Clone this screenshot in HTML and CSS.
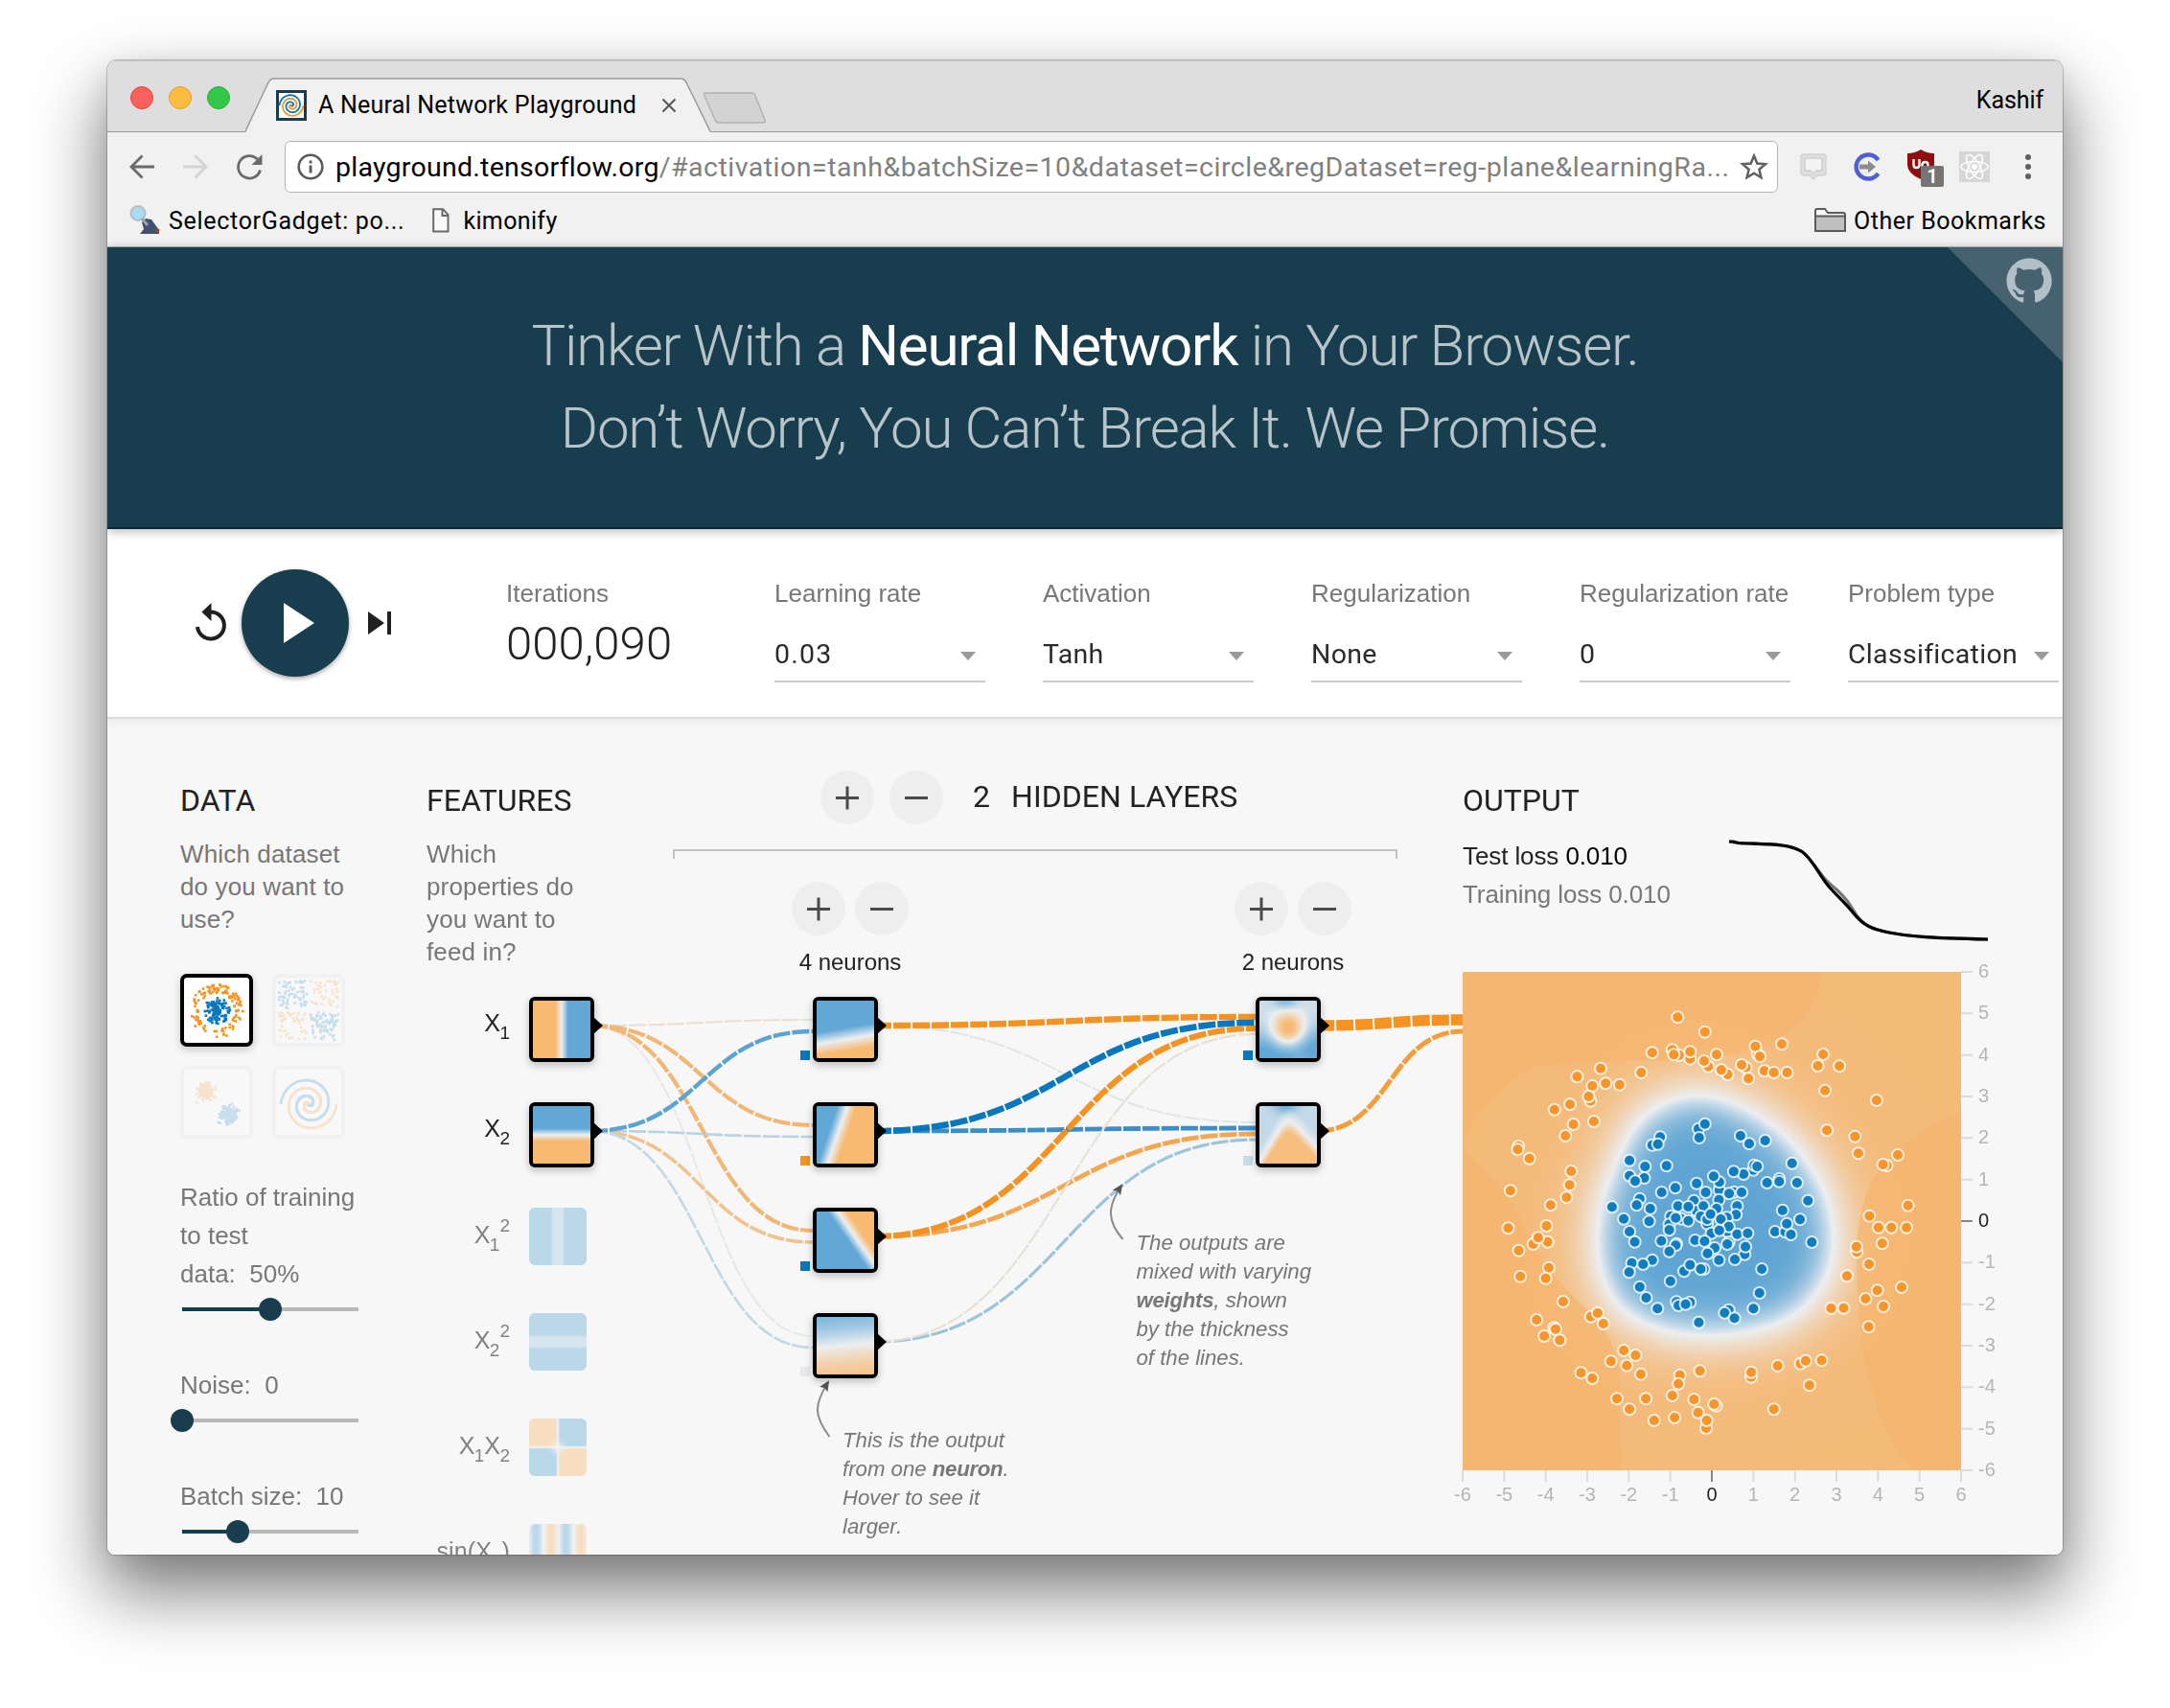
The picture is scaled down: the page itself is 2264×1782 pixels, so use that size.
FILE: index.html
```html
<!DOCTYPE html>
<html lang="en">
<head>
<meta charset="utf-8">
<title>A Neural Network Playground</title>
<link rel="stylesheet" href="styles.css">
</head>
<body>
<div class="window">
  <div class="tabstrip">
    <div class="lights"><i class="red"></i><i class="yellow"></i><i class="green"></i></div>
    <svg class="tab-shape" width="560" height="58" viewBox="0 0 560 58">
      <path d="M478 16h50q3 0 4 3l10 25q1 3-2 3h-46q-3 0-4-3l-11-25q-1-3 2-3z" fill="#d3d3d3" stroke="#b3b3b3" stroke-width="1.500"/>
      <path d="M0 58L1 55.500L24 5Q26 1 30 1H454Q458 1 460 5L484 55.500L485 58z" fill="#f1f1f1"/>
      <path d="M0 56L24 5Q26 1 30 1H454Q458 1 460 5L485 56" fill="none" stroke="#9a9a9a" stroke-width="1.500"/>
    </svg>
    <div class="tab">
      <svg class="favicon" width="32" height="32" viewBox="0 0 32 32"><path d="M0 0h32v32H0z" fill="#183d4e"/><path d="M3 3h26v26H3z" fill="#fff"/><path id="fav-a" fill="none" stroke="#0877bd" stroke-width="1.800"/><path id="fav-b" fill="none" stroke="#f59322" stroke-width="1.800"/></svg>
      <span class="tab-title">A Neural Network Playground</span>
      <svg width="16" height="16" viewBox="0 0 16 16"><path d="M1.500 1.500l13 13m0-13l-13 13" stroke="#555" stroke-width="2"/></svg>
    </div>
    <span class="profile">Kashif</span>
  </div>
  <div class="toolbar">
    <svg width="28" height="28" viewBox="0 0 28 28" fill="none" stroke="#6a6a6a" stroke-width="2.800"><path d="M27 14H3M14.500 2.500L3 14l11.500 11.500"/></svg>
    <svg class="fwd" width="28" height="28" viewBox="0 0 28 28" fill="none" stroke="#d3d3d3" stroke-width="2.800"><path d="M1 14h24M13.500 2.500L25 14L13.500 25.500"/></svg>
    <svg class="reload" width="28" height="28" viewBox="0 0 28 28"><path d="M25.500 17.500A11.700 11.700 0 1 1 22.500 6" fill="none" stroke="#6a6a6a" stroke-width="2.800"/><path d="M27.500 1v11h-11z" fill="#6a6a6a"/></svg>
    <div class="omnibox">
      <svg width="28" height="28" viewBox="0 0 28 28"><circle cx="14" cy="14" r="12.300" fill="none" stroke="#5a5a5a" stroke-width="2.600"/><path d="M12.600 12.500h2.900v8h-2.900zM12.600 7.500h2.900v3h-2.900z" fill="#5a5a5a"/></svg>
      <span class="url"><b>playground.tensorflow.org</b>/#activation=tanh&amp;batchSize=10&amp;dataset=circle&amp;regDataset=reg-plane&amp;learningRa...</span>
      <svg class="star" width="30" height="30" viewBox="0 0 30 30"><path d="M15 3.500l3.300 8 8.700.7-6.600 5.600 2 8.400-7.400-4.500-7.400 4.500 2-8.400L3 12.200l8.700-.7z" fill="none" stroke="#5f5f5f" stroke-width="2.500"/></svg>
    </div>
    <div class="extensions">
      <svg width="30" height="30" viewBox="0 0 30 30"><path d="M5 2h20q3 0 3 3v16q0 3-3 3h-6l-4 4-4-4H5q-3 0-3-3V5q0-3 3-3z" fill="#dedede" stroke="#d2d2d2" stroke-width="1.500"/><path d="M8 6h14q2 0 2 2v9q0 2-2 2h-4l-3 3-3-3H8q-2 0-2-2V8q0-2 2-2z" fill="#f3f3f3" stroke="#cfcfcf" stroke-width="1.500"/></svg>
      <svg width="30" height="30" viewBox="0 0 30 30"><path d="M26.500 8A12.500 12.500 0 1 0 26.500 22" fill="none" stroke="#4f5fd6" stroke-width="4.500"/><path d="M7 12.500h9V8.500l8 6.500-8 6.500v-4H7z" fill="#8d8d8d"/></svg>
      <svg width="40" height="40" viewBox="0 0 40 40"><path d="M15 0q6 4 14 4v12q0 9-14 15Q1 25 1 16V4Q9 4 15 0z" fill="#8e0d0d"/><path d="M7.500 10v6q0 3 3 3t3-3v-6M16.500 23v-7q0-3 3-3t3 3v4" fill="none" stroke="#fff" stroke-width="2.400"/><rect x="15" y="17" width="24" height="22" rx="2" fill="#757575"/><text x="27" y="35" text-anchor="middle" class="badge">1</text></svg>
      <svg width="32" height="32" viewBox="0 0 32 32"><path d="M0 0h32v32H0z" fill="#d6d6d6"/><g fill="none" stroke="#fff" stroke-width="1.500"><ellipse cx="16" cy="16" rx="14" ry="5.500"/><ellipse cx="16" cy="16" rx="14" ry="5.500" transform="rotate(60 16 16)"/><ellipse cx="16" cy="16" rx="14" ry="5.500" transform="rotate(120 16 16)"/></g><circle cx="16" cy="16" r="3" fill="#fff"/></svg>
      <svg width="8" height="28" viewBox="0 0 8 28" fill="#5f5f5f"><circle cx="4" cy="4" r="3"/><circle cx="4" cy="14" r="3"/><circle cx="4" cy="24" r="3"/></svg>
    </div>
  </div>
  <div class="bookmarks">
    <svg width="32" height="30" viewBox="0 0 32 30"><path d="M13 18l4-4 6 1 5 7 3 4v4H11l4-5z" fill="#44506f"/><path d="M29 24l3 2-2 2-3-1z" fill="#a34a20"/><circle cx="9" cy="8.500" r="7.500" fill="#a8dcf5" stroke="#b3bec6" stroke-width="2"/><path d="M13 14l6 7" stroke="#9aa3ad" stroke-width="3"/></svg>
    <span class="sel">SelectorGadget: po...</span>
    <svg class="doc" width="18" height="26" viewBox="0 0 18 26"><path d="M1.200 1.200h10l5.300 6v17.300H1.200zM10.500 1.500v6.500h6" fill="#fafafa" stroke="#6a6a6a" stroke-width="2"/></svg>
    <span class="kim">kimonify</span>
    <span class="other"><svg width="33" height="26" viewBox="0 0 33 26"><path d="M1 24V3q0-2 2-2h8l3 4h16q2 0 2 2v17z" fill="#f6f6f6" stroke="#5a5a5a" stroke-width="2"/><path d="M1 8.500h31V24H1z" fill="#c0c0c0" stroke="#5a5a5a" stroke-width="2"/></svg>Other Bookmarks</span>
  </div>

  <header class="hero">
    <h1>Tinker With a <b>Neural Network</b> in Your Browser.<br>Don’t Worry, You Can’t Break It. We Promise.</h1>
    <svg class="corner" width="120" height="120" viewBox="0 0 120 120"><path d="M0 0h120v120z" fill="#466270"/><path transform="translate(61.500 11.500) scale(2.950)" fill="#b3bfc6" d="M8 0C3.580 0 0 3.580 0 8c0 3.540 2.290 6.530 5.470 7.590.4.070.55-.17.55-.38 0-.19-.01-.82-.01-1.490-2.010.37-2.530-.49-2.690-.94-.09-.23-.48-.94-.82-1.130-.28-.15-.68-.52-.01-.53.63-.01 1.080.58 1.230.82.72 1.210 1.870.87 2.330.66.07-.52.28-.87.51-1.070-1.780-.2-3.640-.89-3.640-3.950 0-.87.31-1.590.82-2.150-.08-.2-.36-1.020.08-2.120 0 0 .67-.21 2.200.82.64-.18 1.320-.27 2-.27s1.360.09 2 .27c1.530-1.040 2.200-.82 2.200-.82.44 1.100.16 1.920.08 2.120.51.56.82 1.270.82 2.150 0 3.070-1.870 3.750-3.650 3.950.29.25.54.73.54 1.480 0 1.070-.01 1.930-.01 2.200 0 .21.15.46.55.38A8.010 8.010 0 0016 8c0-4.420-3.580-8-8-8z"/></svg>
  </header>

  <section class="controls">
    <div class="transport">
      <svg width="34" height="42" viewBox="0 0 34 42"><path d="M17 9.500A14 14 0 1 1 3 25" fill="none" stroke="#202020" stroke-width="4"/><path d="M17.500 0v19L7.500 9.500z" fill="#202020"/></svg>
      <div class="play"><svg width="34" height="42" viewBox="0 0 34 42"><path d="M1 0l32 21L1 42z" fill="#fff"/></svg></div>
      <svg class="step" width="24" height="24" viewBox="0 0 24 24" fill="#202020"><path d="M0 0l17 12L0 24zM20 0h4v24h-4z"/></svg>
    </div>
    <div class="control iter"><label>Iterations</label><output>000,090</output></div>
    <div class="control"><label>Learning rate</label><div class="select wide">0.03</div></div>
    <div class="control"><label>Activation</label><div class="select">Tanh</div></div>
    <div class="control"><label>Regularization</label><div class="select">None</div></div>
    <div class="control"><label>Regularization rate</label><div class="select">0</div></div>
    <div class="control"><label>Problem type</label><div class="select">Classification</div></div>
  </section>

  <main class="main">
    <section class="data">
      <h2>DATA</h2>
      <p>Which dataset<br>do you want to<br>use?</p>
      <div class="thumbs">
        <div class="thumb on"><canvas id="d-circle" width="68" height="68"></canvas></div>
        <div class="thumb"><canvas id="d-xor" width="68" height="68"></canvas></div>
        <div class="thumb"><canvas id="d-gauss" width="68" height="68"></canvas></div>
        <div class="thumb"><canvas id="d-spiral" width="68" height="68"></canvas></div>
      </div>
      <div class="param">Ratio of training<br>to test<br>data:&nbsp; 50%</div>
      <div class="slider"><div class="fill" style="width:50%"></div></div>
      <div class="param">Noise:&nbsp; 0</div>
      <div class="slider"><div class="fill" style="width:0%"></div></div>
      <div class="param">Batch size:&nbsp; 10</div>
      <div class="slider"><div class="fill" style="width:31.500%"></div></div>
    </section>
    <section class="features">
      <h2>FEATURES</h2>
      <p>Which<br>properties do<br>you want to<br>feed in?</p>
    </section>
    <section class="layers">
      <div class="layers-head"><i class="btn plus"></i><i class="btn"></i><h2><span>2</span>HIDDEN LAYERS</h2></div>
      <div class="bracket"></div>
      <div class="layer-controls">
        <div class="layer"><i class="btn plus"></i><i class="btn"></i><div>4 neurons</div></div>
        <div class="layer"><i class="btn plus"></i><i class="btn"></i><div>2 neurons</div></div>
      </div>
    </section>
    <section class="output">
      <h2>OUTPUT</h2>
      <div class="loss-row">
        <div class="loss">Test loss <b>0.010</b><br><span>Training loss 0.010</span></div>
        <svg class="curve" width="274" height="110" viewBox="1802 872 274 110" fill="none" stroke-width="3.200"><path d="M1804 878L1812 879.500C1846 881 1866 880 1880 888.500C1891 896 1899 914 1909 922C1920 931 1927 938 1932 947C1937 956 1944 966 1959 970C1985 978 2030 979 2074 980" stroke="#777"/><path d="M1804 878L1808 878L1814 879.500C1846 881 1866 880 1880 888.500C1891 896 1899 915 1909 926C1917 935 1924 941 1931 949.500C1937 957 1944 966 1959 970C1985 978 2030 979 2074 980" stroke="#000"/></svg>
      </div>
      <div class="plot">
        <canvas id="heat" width="520" height="520"></canvas>
        <svg id="plot-layer" width="576" height="560" viewBox="0 0 576 560"></svg>
      </div>
    </section>
    <div class="network">
      <svg id="net" width="1414" height="872" viewBox="112 750 1414 872">
        <defs><marker id="tip" markerWidth="11" markerHeight="10" refX="9" refY="5" orient="auto" markerUnits="userSpaceOnUse"><path d="M0 0L11 5L0 10L2 5z" fill="#555"/></marker></defs>
        <g id="links" fill="none" stroke-dasharray="18 2"></g>
        <g id="marks"></g>
        <g class="flabel" id="flabels" text-anchor="end">
          <text x="532" y="1076">X<tspan class="s" dy="8">1</tspan></text>
          <text x="532" y="1186">X<tspan class="s" dy="8">2</tspan></text>
          <g opacity=".55">
            <text x="532" y="1297">X<tspan class="s" dy="8">1</tspan><tspan class="s" dy="-20">2</tspan></text>
            <text x="532" y="1407">X<tspan class="s" dy="8">2</tspan><tspan class="s" dy="-20">2</tspan></text>
            <text x="532" y="1517">X<tspan class="s" dy="8">1</tspan><tspan dy="-8">X</tspan><tspan class="s" dy="8">2</tspan></text>
            <text class="sin" x="532" y="1627">sin(X<tspan class="s" dy="8">1</tspan><tspan dy="-8">)</tspan></text>
          </g>
        </g>
        <g fill="none" stroke="#8b8b8b" stroke-width="2">
          <path d="M865.500 1499C849 1477 849 1466 864 1442" marker-end="url(#tip)"/>
          <path d="M1171.500 1293C1155 1274 1155 1259 1170 1237" marker-end="url(#tip)"/>
        </g>
        <g class="callout">
          <text x="879" y="1510">This is the output</text><text x="879" y="1540">from one <tspan class="b">neuron</tspan>.</text><text x="879" y="1570">Hover to see it</text><text x="879" y="1600">larger.</text>
          <text x="1185.500" y="1304">The outputs are</text><text x="1185.500" y="1334">mixed with varying</text><text x="1185.500" y="1364"><tspan class="b">weights</tspan>, shown</text><text x="1185.500" y="1394">by the thickness</text><text x="1185.500" y="1424">of the lines.</text>
        </g>
      </svg>
    </div>
  </main>
</div>
<script src="playground.js"></script>
</body>
</html>
```
FILE: styles.css
```css
* { box-sizing: border-box; }
body { margin: 0; background: #fff; padding: 63px 0 0 112px; height: 1782px; overflow: hidden; font-family: Roboto, sans-serif; }
svg, canvas { display: block; flex: none; }
i { display: block; }
.window { width: 2040px; height: 1559px; display: flex; flex-direction: column; border-radius: 10px 10px 8px 8px; overflow: hidden; background: #f7f7f7;
  box-shadow: 0 0 1px 1px rgba(0,0,0,.22), 0 36px 72px 4px rgba(0,0,0,.5), 0 8px 30px rgba(0,0,0,.08); }

.tabstrip { position: relative; height: 75px; flex: none; background: #dedede; border-top: 1px solid #c4c4c4; border-bottom: 1.500px solid #9a9a9a; display: flex; align-items: flex-start; }
.lights { display: flex; gap: 16px; padding: 26px 0 0 24px; }
.lights i { width: 24px; height: 24px; border-radius: 50%; border: 1px solid; }
.lights .red { background: #fc605b; border-color: #e0443e; }
.lights .yellow { background: #fdbc40; border-color: #dea034; }
.lights .green { background: #34c84a; border-color: #2dab35; }
.tab-shape { position: absolute; left: 144px; top: 17px; }
.tab { position: relative; display: flex; align-items: center; height: 56px; margin: 18px 0 0 48px; }
.favicon { margin-right: 12px; }
.tab-title { font-size: 25px; line-height: 30px; padding-bottom: 1px; width: 358px; white-space: nowrap; letter-spacing: .22px; }
.profile { margin-left: auto; padding: 26px 20px 0 0; font-size: 25px; line-height: 30px; letter-spacing: -.1px; }

.toolbar { height: 72px; flex: none; background: #f1f1f1; display: flex; align-items: center; padding-left: 22px; }
.fwd { margin-left: 28px; }
.reload { margin-left: 28px; }
.omnibox { margin-left: 23px; width: 1558px; height: 54px; background: #fff; border: 1.500px solid #b5b5b5; border-radius: 6px; display: flex; align-items: center; padding-left: 12px; }
.url { margin-left: 12px; padding-top: 1px; font-size: 28.500px; color: #808080; white-space: nowrap; width: 1465px; letter-spacing: .5px; }
.url b { color: #000; font-weight: 400; letter-spacing: .26px; }
.extensions { display: flex; align-items: center; margin-left: 22px; gap: 26px; }
.extensions svg:nth-child(3) { margin: 4px -11px 0 0; }
.extensions svg:nth-child(5) { margin-left: 10px; }
.badge { font: 600 20px Roboto, sans-serif; fill: #fff; }
.bookmarks { height: 48px; flex: none; background: #f1f1f1; border-bottom: 1.500px solid #b6b6b6; display: flex; align-items: flex-start; padding: 4px 17px 0 23px; font-size: 25px; line-height: 33px; letter-spacing: .5px; }
.bookmarks > span { margin-left: 9px; }
.bookmarks .sel { letter-spacing: .7px; }
.bookmarks .doc { margin: 3px 0 0 29px; }
.bookmarks .kim { margin-left: 14px; letter-spacing: .35px; }
.bookmarks .other { margin-left: auto; display: flex; gap: 8px; }
.other svg { margin-top: 3px; }

.hero { position: relative; z-index: 2; height: 294px; flex: none; background: #183d4e; border-bottom: 2px solid #0f2430; box-shadow: 0 2px 10px rgba(0,0,0,.3); text-align: center; }
h1 { margin: 0; padding-top: 60px; font-weight: 300; font-size: 60px; line-height: 86px; letter-spacing: -1.220px; color: #b9c4c9; white-space: nowrap; }
h1 b { font-weight: 400; color: #fff; }
.corner { position: absolute; right: 0; top: 0; }

.controls { position: relative; z-index: 1; height: 198px; flex: none; background: #fff; border-bottom: 2px solid #dcdcdc; box-shadow: 0 2px 10px rgba(0,0,0,.07); display: flex; gap: 60px; }
.transport { width: 356px; padding: 42px 0 0 91px; display: flex; align-items: center; height: 154px; }
.play { width: 112px; height: 112px; margin: 0 20px 0 15px; border-radius: 50%; background: #183d4e; display: flex; align-items: center; justify-content: center; padding-left: 8px; box-shadow: 0 2px 5px rgba(0,0,0,.35); }
.control { width: 220px; padding-top: 50px; flex: none; }
.control label { display: block; font: 26px/34px "Liberation Sans", sans-serif; color: #777; white-space: nowrap; }
.control output { display: block; font: 300 49px/60px Roboto, sans-serif; color: #222; margin-top: 6px; letter-spacing: .1px; }
.select { position: relative; margin-top: 20px; height: 56px; font-size: 28.500px; line-height: 53px; color: #2a2a2a; border-bottom: 2px solid #cbcbcb; letter-spacing: .3px; }
.select.wide { letter-spacing: 1.200px; }
.select::after { content: ""; position: absolute; right: 10px; top: 24px; border: 8px solid transparent; border-top: 9px solid #999; border-bottom: 0; }

.main { position: relative; height: 872px; flex: none; display: flex; background: #f7f7f7; padding: 65px 0 0 76px; }
h2 { margin: 0; font-weight: 400; font-size: 32px; line-height: 40px; height: 40px; color: #222; white-space: nowrap; letter-spacing: 0; }
p { margin: 19px 0 40px; font: 26px/34px "Liberation Sans", sans-serif; letter-spacing: .15px; color: #777; white-space: nowrap; }
.data { width: 257px; }
.thumbs { display: grid; grid-template-columns: 76px 76px; gap: 20px; margin-bottom: 41px; }
.thumb { width: 76px; height: 76px; border: 4px solid #f1f1f1; border-radius: 7px; background: #f8f8f8; }
.thumb canvas { opacity: .2; }
.thumb.on { border-color: #000; background: #fff; box-shadow: 0 3px 8px rgba(0,0,0,.2); }
.thumb.on canvas { opacity: 1; }
.param { font: 26px/40px "Liberation Sans", sans-serif; color: #777; white-space: nowrap; }
.slider { margin: 15px 0 57px 2px; width: 184px; height: 4px; background: #b8b8b8; }
.fill { position: relative; height: 4px; background: #183d4e; }
.fill::after { content: ""; position: absolute; right: -12px; top: -10px; width: 24px; height: 24px; border-radius: 50%; background: #183d4e; }
.features { width: 257px; }
.layers { width: 756px; margin-top: -11px; }
.layers-head { display: flex; gap: 16px; padding-left: 154px; align-items: center; height: 56px; }
.layers-head h2 { margin-left: 15px; line-height: 38px; letter-spacing: .05px; }
.layers-head span { margin-right: 22px; }
.btn { position: relative; width: 56px; height: 56px; border-radius: 50%; background: #eee; flex: none; }
.btn::before, .plus::after { content: ""; position: absolute; left: 16px; top: 27px; width: 24px; height: 3px; background: #4a4a4a; }
.plus::after { transform: rotate(90deg); }
.bracket { margin-top: 26px; height: 10px; border: 2px solid #c4c4c4; border-bottom: 0; }
.layer-controls { display: flex; gap: 340px; padding: 24px 0 0 124px; }
.layer { width: 122px; display: flex; flex-wrap: wrap; gap: 10px; }
.layer div { width: 122px; text-align: center; font: 24px/36px "Liberation Sans", sans-serif; color: #222; }
.output { margin-left: 68px; width: 576px; }
.loss-row { display: flex; margin-top: 17px; height: 142px; }
.loss { width: 276px; font: 26px/40px "Liberation Sans", sans-serif; color: #222; white-space: nowrap; letter-spacing: -.1px; padding-top: 1px; }
.loss b { font-weight: 400; color: #000; }
.loss span { color: #777; }
.plot { position: relative; }
#plot-layer { position: absolute; left: 0; top: 0; overflow: visible; }
#plot-layer text { font: 20px "Liberation Sans", sans-serif; fill: #b5b5b5; }
#plot-layer text.zero { fill: #222; }
.network { position: absolute; left: 0; top: 0; pointer-events: none; }
.flabel { font: 25px "Liberation Sans", sans-serif; fill: #222; letter-spacing: -.6px; }
.flabel .s { font-size: 19px; letter-spacing: 0; }
.flabel .sin { letter-spacing: .1px; }
.callout { font: italic 22.200px "Liberation Sans", sans-serif; fill: #777; }
.callout .b { font-weight: 700; letter-spacing: -.25px; }
.node { position: absolute; width: 68px; height: 68px; border: 4px solid #000; border-radius: 6px; overflow: hidden; box-shadow: 0 3px 8px rgba(0,0,0,.25); }
.node.off { width: 60px; height: 60px; border: 0; opacity: .4; box-shadow: none; }
```
FILE: playground.js
```js
const NS = 'http://www.w3.org/2000/svg';
const add = (parent, tag, attrs, text) => {
  const e = document.createElementNS(NS, tag);
  for (const k in attrs) e.setAttribute(k, attrs[k]);
  if (text !== undefined) e.textContent = text;
  parent.appendChild(e);
  return e;
};
const clamp = t => Math.max(-1, Math.min(1, t));

// Colour scale: -1 orange, 0 grey, +1 blue.
function paint(canvas, f, orange = [248, 185, 113], blue = [98, 168, 215]) {
  const w = canvas.width, h = canvas.height, ctx = canvas.getContext('2d');
  const img = ctx.createImageData(w, h), mid = [236, 238, 240];
  for (let y = 0; y < h; y++) for (let x = 0; x < w; x++) {
    const t = clamp(f((x + .5) / w, (y + .5) / h)), c = t < 0 ? orange : blue, a = Math.abs(t), i = (y * w + x) * 4;
    for (let k = 0; k < 3; k++) img.data[i + k] = mid[k] + (c[k] - mid[k]) * a;
    img.data[i + 3] = 255;
  }
  ctx.putImageData(img, 0, 0);
}

// Links between nodes.
const links = [
  [582, 1070, 848, 1064, '#e8dfd4', 2], [582, 1070, 848, 1394, '#e8e7e4', 2], [582, 1070, 848, 1174, '#f1b775', 4.2], [582, 1070, 848, 1284, '#f1b775', 4.2],
  [582, 1180, 848, 1186, '#b7d2e3', 2.6], [582, 1180, 848, 1296, '#f0c28f', 3.6], [582, 1180, 848, 1406, '#c0d7e5', 2.6], [582, 1180, 848, 1076, '#5ba3d1', 4.4],
  [878, 1070, 1310, 1171, '#e0e5e8', 2], [878, 1070, 1310, 1061, '#f59322', 6.4],
  [878, 1180, 1310, 1177, '#3a8fca', 4.8], [878, 1180, 1310, 1067, '#0877bd', 6.6],
  [878, 1290, 1310, 1183, '#f4a650', 4.8], [878, 1290, 1310, 1073, '#f59322', 6.2],
  [878, 1400, 1310, 1189, '#9cc4dd', 3.2], [878, 1400, 1310, 1079, '#e8e0d6', 2.2],
  [1340, 1070, 1526, 1064, '#f59322', 11.4], [1340, 1180, 1526, 1076, '#f59d38', 5]
];
const linkLayer = document.getElementById('links');
for (const [x, y, x2, y2, color, w] of links) {
  const x1 = x + 34, m = (x1 + x2) / 2;
  add(linkLayer, 'path', { d: `M${x1} ${y}C${m} ${y} ${m} ${y2} ${x2} ${y2}`, stroke: color, 'stroke-width': w });
}

const g = (x, y, r) => Math.exp(-(x * x + y * y) / (r * r));
const nodes = [
  [552, 1040, (u, v) => (u - .5) * 9], [552, 1150, (u, v) => (.5 - v) * 9],
  [552, 1260, u => .5 + Math.max(0, Math.abs(u - .5) - .08) * 12, 1], [552, 1370, (u, v) => .5 + Math.max(0, Math.abs(v - .5) - .08) * 12, 1],
  [552, 1480, (u, v) => clamp((u - .5) * 30) * clamp((.5 - v) * 30) * (1 - .8 * g(u - .5, v - .5, .1)), 1],
  [552, 1590, u => Math.cos(2 * Math.PI * (u - .12) / .52), 1],
  [848, 1040, (u, v) => (.76 - .17 * u - v) * 5, 0, '#0877bd'],
  [848, 1150, (u, v) => (.53 - .34 * v - u) * 6, 0, '#f59322'],
  [848, 1260, (u, v) => (.36 + .7 * v - u) * 6, 0, '#0877bd'],
  [848, 1370, (u, v) => Math.tanh((.54 - .1 * u - v) * 2), 0, '#e8e9e6'],
  [1310, 1040, (u, v) => .22 + .6 * g(u - .45, v * 1.3, .2) + .85 * g(u - 1, v - .85, .4) + .85 * g(u - .05, v - .95, .42) + .35 * g(u - .5, v - 1, .25) - 1.45 * g(u - .5, v - .48, .27), 0, '#0877bd'],
  [1310, 1150, (u, v) => {
    const edge = .14 + Math.sqrt((u - .5) ** 2 + .012) * (u < .5 ? 1.75 : 1.15) - (u > .5 ? 0 : .06);
    return v > edge ? -Math.min(.9, (v - edge) * 4.5) : Math.min(.3, (edge - v) * 1.2) + .6 * g(u - .45, v * 1.6, .2);
  }, 0, '#c8dce8']
];
const net = document.querySelector('.network'), marks = document.getElementById('marks');
for (const [x, y, f, off, bias] of nodes) {
  const d = document.createElement('div'), c = document.createElement('canvas');
  d.className = 'node' + (off ? ' off' : '');
  d.style.left = x - 112 + 'px'; d.style.top = y - 750 + 'px';
  c.width = c.height = 60; paint(c, f);
  d.appendChild(c); net.appendChild(d);
  if (!off) add(marks, 'path', { d: `M${x + 67} ${y + 21}l10 9-10 9z` });
  if (bias) add(marks, 'rect', { x: x - 13, y: y + 56, width: 10, height: 10, fill: bias });
}

// Decision boundary of the output: radius by angle (degrees), smoothed into a lookup table.
const ring = [[0, 125], [22, 133], [45, 132], [68, 122], [90, 118], [115, 124], [138, 133], [160, 125], [180, 117], [210, 114], [237, 131], [262, 134], [285, 122], [305, 117], [327, 116], [360, 125]];
function rawRadius(a) {
  a = (a + 360) % 360;
  for (let i = 1; i < ring.length; i++) if (a <= ring[i][0]) {
    const [a0, r0] = ring[i - 1], [a1, r1] = ring[i];
    return r0 + (r1 - r0) * (a - a0) / (a1 - a0);
  }
}
const radii = [];
for (let a = 0; a < 361; a++) {
  let sum = 0, weight = 0;
  for (let k = -24; k <= 24; k++) { const w = Math.exp(-k * k / 130); sum += rawRadius(a + k) * w; weight += w; }
  radii.push(sum / weight);
}
const heat = document.getElementById('heat');
paint(heat, (u, v) => {
  const x = (u - .5) * 520, y = (v - .5) * 520, a = (Math.atan2(y, x) * 180 / Math.PI + 360) % 360, i = Math.floor(a);
  const d = Math.hypot(x, y) - (radii[i] + (radii[i + 1] - radii[i]) * (a - i));
  return d < 0 ? Math.tanh(-d / 26) : -.92 * Math.tanh(d / 34);
}, [245, 181, 110], [94, 164, 211]);
// Contour steps where the output saturates.
const hc = heat.getContext('2d');
hc.fillStyle = 'rgba(245,181,110,.7)';
for (const d of [
  'M0 172Q30 125 75 98L160 93L250 92Q330 80 352 50Q372 30 374 0H0z',
  'M0 185Q40 220 62 262Q90 320 130 352Q170 390 163 450L166 520H0z',
  'M520 144Q450 180 436 205Q410 240 411 300Q412 380 425 430Q440 490 472 520H520z'
]) hc.fill(new Path2D(d));

// Sample points, on a 1568-unit plot grid.
const upOrange = '633,784 705,830 566,895 619,886 637,903 623,901 666,914 666,892 736,901 714,938 703,921 765,963 748,949 844,900 838,875 908,868 850,907 813,941 802,933 820,976 862,952 887,957 922,957 1017,900 1003,936 1060,937 1022,1013 1158,1044 1027,1138 1101,1157 1110,1210 1214,1215 430,944 368,970 408,999 443,991 480,995 537,957 403,1046 398,1032 308,1073 349,1057 358,1119 412,1110 337,1155 213,1188 211,1198 242,1226';
const lowOrange = '352,66 348,109 192,127 340,148 298,172 186,244 287,237 252,294 290,287 265,274 214,314 293,368 218,395 285,401 331,474 261,531 307,556 311,560 281,582 322,595 404,521 422,510 437,543 491,627 522,642 457,661 499,674 378,697 408,714 536,701 473,778 549,778 506,811 571,846 639,704 635,731 619,768 692,691 676,780 687,821 625,837 708,870 710,846 735,800 729,795 827,710 827,695 897,675 957,668 971,659 1013,658 981,736 887,811 1185,48 1175,45 1241,173 1139,206 1163,242 1197,242 1237,242 1173,292 1106,319 1105,302 1138,357 1080,394 1224,429 1160,439 1129,465 1176,489 1038,495 1071,494 1137,553';
const upBlue = '587,1159 566,1184 581,1181 688,1133 705,1118 690,1161 799,1155 822,1180 864,1170';
const lowBlue = '506,32 547,51 604,49 935,41 833,62 835,47 843,51 807,75 781,67 506,80 545,87 521,97 591,132 627,118 683,104 743,125 743,100 728,82 707,132 742,155 782,131 802,132 769,136 869,102 901,90 901,98 948,102 977,158 910,188 790,175 787,202 533,152 525,172 561,183 460,178 491,215 558,223 506,255 520,287 634,175 676,158 683,190 661,177 701,175 736,183 615,207 643,215 611,232 628,212 611,250 661,221 694,207 711,230 711,217 720,200 763,211 747,216 765,255 768,239 722,260 743,251 790,263 818,260 890,255 917,256 932,264 921,230 956,217 987,288 590,284 630,293 628,298 611,317 679,282 704,285 731,306 712,323 768,288 764,294 810,326 812,302 742,344 784,342 566,344 512,353 542,357 505,382 650,379 666,359 702,372 694,372 855,372 614,410 533,428 550,462 580,496 630,475 635,486 666,476 654,482 849,447 833,496 768,500 757,509 783,526 689,539';
const plot = document.getElementById('plot-layer');
function dots(list, dy, fill) {
  for (const p of list.split(' ')) {
    const [x, y] = p.split(',').map(Number);
    add(plot, 'circle', { cx: (x / 2.529 - 26).toFixed(1), cy: ((y + dy) / 3).toFixed(1), r: 6, fill, stroke: '#fff', 'stroke-opacity': .8, 'stroke-width': 2 });
  }
}
dots(upOrange, -642, '#f7952a'); dots(lowOrange, 558, '#f7952a');
dots(lowBlue, 558, '#117dc1'); dots(upBlue, -642, '#117dc1');
for (let i = -6; i <= 6; i++) {
  const p = 260 + i * 520 / 12, q = 520 - p, zero = i === 0, stroke = zero ? '#888' : '#dcdcdc';
  add(plot, 'path', { d: `M${p} 520v12M520 ${q}h12`, stroke, 'stroke-width': 2 });
  add(plot, 'text', { x: p, y: 552, 'text-anchor': 'middle', class: zero ? 'zero' : '' }, i);
  add(plot, 'text', { x: 538, y: q + 6, class: zero ? 'zero' : '' }, i);
}

// Dataset thumbnails.
let seed = 7;
const rnd = () => (seed = (seed * 16807) % 2147483647) / 2147483647;
const norm = () => rnd() + rnd() + rnd() + rnd() - 2;
const O = '#f59322', B = '#0877bd';
function thumb(id, n, gen) {
  const ctx = document.getElementById(id).getContext('2d');
  for (let i = 0; i < n; i++) { const [x, y, c] = gen(i); ctx.fillStyle = c; ctx.fillRect(34 + x - 1.3, 34 + y - 1.3, 2.6, 2.6); }
}
thumb('d-circle', 240, i => { const a = rnd() * 6.283, r = i % 2 ? rnd() * 14 : 19 + rnd() * 9; return [Math.cos(a) * r, 1 + Math.sin(a) * r, i % 2 ? B : O]; });
thumb('d-xor', 230, () => { const x = (rnd() - .5) * 58, y = (rnd() - .5) * 58; return [x + Math.sign(x) * 2, y + Math.sign(y) * 2, x * y > 0 ? B : O]; });
thumb('d-gauss', 300, i => i % 2 ? [-11 + norm() * 7, -11 + norm() * 7, O] : [12 + norm() * 7, 13 + norm() * 7, B]);
thumb('d-spiral', 400, i => { const s = i % 2, t = (i >> 1) / 200, a = t * 11 + (s ? 3.14 : 0), r = t * 29; return [Math.sin(a) * r, 2 + Math.cos(a) * r, s ? O : B]; });
function spiral(id, phase) {
  let d = '';
  for (let i = 0; i <= 60; i++) { const a = i / 60 * 11 + phase, r = i / 60 * 12.5; d += (i ? 'L' : 'M') + (16 + Math.sin(a) * r).toFixed(1) + ' ' + (16 + Math.cos(a) * r).toFixed(1); }
  document.getElementById(id).setAttribute('d', d);
}
spiral('fav-a', 0); spiral('fav-b', 3.14);
```
